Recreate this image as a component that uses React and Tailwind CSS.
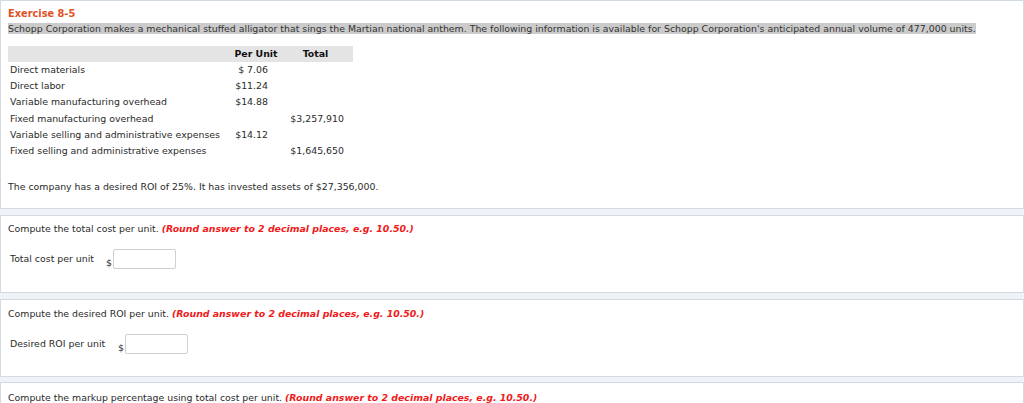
import React from "react";

const rows = [
  ["Direct materials", "$ 7.06", ""],
  ["Direct labor", "$11.24", ""],
  ["Variable manufacturing overhead", "$14.88", ""],
  ["Fixed manufacturing overhead", "", "$3,257,910"],
  ["Variable selling and administrative expenses", "$14.12", ""],
  ["Fixed selling and administrative expenses", "", "$1,645,650"],
];

function Question({ prompt, label, labelW, topPad }) {
  return (
    <div className={`bg-white border border-[#d3dae2] h-[78px] ${topPad} pl-[7px]`}>
      <div className="leading-[14px]">
        Compute {prompt}.{" "}
        <span className="text-[#f01a1a] font-bold italic">(Round answer to 2 decimal places, e.g. 10.50.)</span>
      </div>
      <div className="flex mt-[13px] pl-[2px]">
        <div className={`leading-[14px] mt-[3px] ${labelW}`}>{label}</div>
        <div className="flex items-end">
          <span className="leading-[10px] mb-[1px] mr-[1px]">$</span>
          <div className="w-[63px] h-[20px] border border-[#cfcfcf] rounded-[2px] bg-white"></div>
        </div>
      </div>
    </div>
  );
}

export default function App() {
  return (
    <div
      className="w-[1024px] h-[403px] overflow-hidden bg-[#eff3f7] text-[#2a2a2a] text-[9.4px]"
      style={{ fontFamily: '"DejaVu Sans", Verdana, sans-serif' }}
    >
      <div className="bg-white border border-[#d3dae2] h-[209px] pl-[7px] pt-[6px]">
        <div className="leading-[14px] font-bold text-[#e0521f] text-[9.8px]">Exercise 8-5</div>
        <div className="leading-[14px] mt-[1px]">
          <span className="bg-[#cbcbcb] text-[#333]">
            Schopp Corporation makes a mechanical stuffed alligator that sings the Martian national anthem. The following information is available for Schopp Corporation's anticipated annual volume of 477,000 units.
          </span>
        </div>
        <div className="mt-[10px] w-[345px]">
          <div className="grid grid-cols-[222px_52px_71px] h-[16px] bg-[#e4e4e4] items-center font-bold text-[#111]">
            <div></div>
            <div className="text-center">Per Unit</div>
            <div className="text-center pr-[4px]">Total</div>
          </div>
          {rows.map((r) => (
            <div key={r[0]} className="grid grid-cols-[222px_52px_71px] h-[16.2px] items-center">
              <div className="pl-[2px]">{r[0]}</div>
              <div className="text-right pr-[14px]">{r[1]}</div>
              <div className="text-right pr-[9px]">{r[2]}</div>
            </div>
          ))}
        </div>
        <div className="leading-[14px] mt-[21px]">
          The company has a desired ROI of 25%. It has invested assets of $27,356,000.
        </div>
      </div>

      <div className="h-[6px]"></div>
      <Question prompt="the total cost per unit" label="Total cost per unit" labelW="w-[96px]" topPad="pt-[6px]" />
      <div className="h-[6px]"></div>
      <Question prompt="the desired ROI per unit" label="Desired ROI per unit" labelW="w-[108px]" topPad="pt-[7px]" />
      <div className="h-[5px]"></div>
      <div className="bg-white border border-[#d3dae2] h-[40px] pt-[8px] pl-[7px]">
        <div className="leading-[14px]">
          Compute the markup percentage using total cost per unit.{" "}
          <span className="text-[#f01a1a] font-bold italic">(Round answer to 2 decimal places, e.g. 10.50.)</span>
        </div>
      </div>
    </div>
  );
}
